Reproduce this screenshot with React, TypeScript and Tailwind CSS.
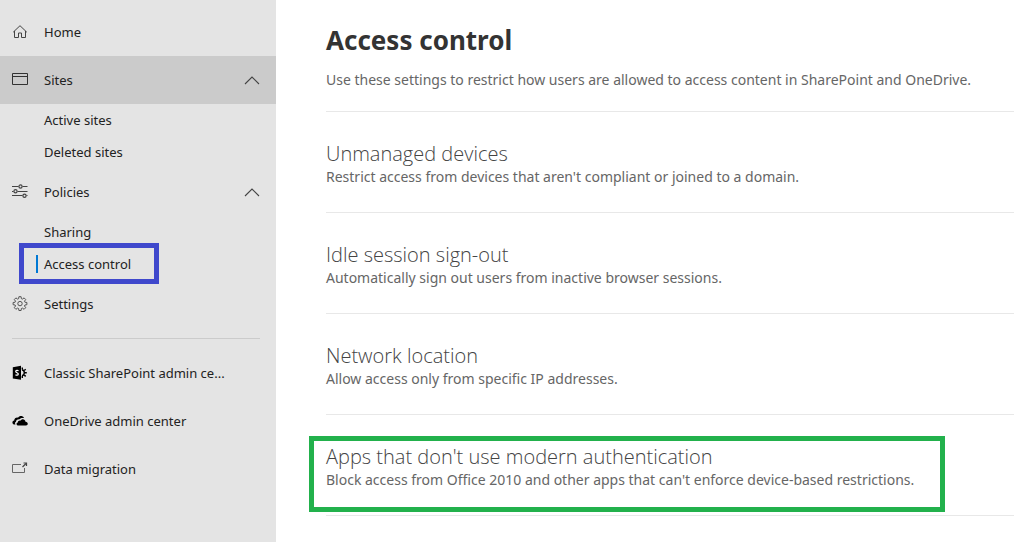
import React from "react";

type IconProps = { children: React.ReactNode };

function Icon({ children }: IconProps) {
  return (
    <svg
      viewBox="0 0 16 16"
      className="h-4 w-4 shrink-0"
      fill="none"
      stroke="#444"
      strokeWidth="1"
      aria-hidden="true"
    >
      {children}
    </svg>
  );
}

const HomeIcon = () => (
  <Icon>
    <path d="M1.200 8.200 8 1.700l6.800 6.500M2.500 7v6.500h4V9h3v4.500h4V7" />
  </Icon>
);

const SitesIcon = () => (
  <Icon>
    <path d="M.5 1.500h15v11H.5zM.5 4.500h15" stroke="#333" />
  </Icon>
);

const PoliciesIcon = () => (
  <Icon>
    <path d="M0 2.500h6.500M10.500 2.500h5M0 7.500h1.500M5.500 7.500h10M0 11.500h10.500M14.500 11.500h1" />
    <circle cx="8.500" cy="2.500" r="1.600" strokeWidth="1.200" />
    <circle cx="3.500" cy="7.300" r="1.600" strokeWidth="1.200" />
    <circle cx="12.500" cy="11.700" r="1.600" strokeWidth="1.200" />
  </Icon>
);

const SettingsIcon = () => (
  <Icon>
    <path
      stroke="#555"
      d="M6.900.7h2.200l.3 2 1 .4 1.700-1.200 1.600 1.600-1.200 1.700.4 1 2 .3v2.200l-2 .3-.4 1 1.200 1.700-1.600 1.600-1.700-1.200-1 .4-.3 2H6.900l-.3-2-1-.4-1.700 1.200-1.600-1.600L3.500 10l-.4-1-2-.3V6.500l2-.3.4-1-1.200-1.700 1.600-1.600 1.700 1.200 1-.4z"
    />
    <circle cx="8" cy="7.600" r="2.200" stroke="#555" />
  </Icon>
);

const SharePointIcon = () => (
  <Icon>
    <path d="M.8 2.200 9 .8v14L.8 13.400z" fill="#000" stroke="none" />
    <path
      d="M6.500 5.700C5.700 5.100 3.700 5 3.700 6.400c0 1.500 2.600 1.100 2.600 2.700 0 1.400-1.900 1.300-2.800.7"
      stroke="#fff"
      strokeWidth="1.200"
    />
    <path d="M10 4.800a3.100 3.100 0 0 1 0 6" stroke="#000" strokeWidth="1.400" />
    <path
      d="M10.300 4.500V2.600M12.200 5.500l1.500-1.300M13 7.800h1.800M12.200 10.100l1.500 1.300M10.300 11.100V13"
      stroke="#000"
      strokeWidth="1.400"
    />
  </Icon>
);

const OneDriveIcon = () => (
  <Icon>
    <path
      d="M3.500 11.500H2C-.1 10.800-.2 8.100 2.200 7.600c.1-2.100 2-3.500 3.800-2.900 1.300-2.200 4.900-2.200 6 .4-1.600-.4-3.200-.3-4.500 1.100-2.300-.1-3.500 1-3.500 2.500-1.200.5-1.200 1.800-.5 2.800z"
      fill="#000"
      stroke="none"
    />
    <path
      d="M6.500 12.500C4 12.500 4 9.800 5.800 9.600c0-1.700 1.500-2.500 2.900-2 1.300-2.200 4.600-1.500 4.800 1.100 2.900.1 2.900 3.800.5 3.800z"
      fill="#000"
      stroke="none"
    />
  </Icon>
);

const MigrationIcon = () => (
  <Icon>
    <path d="M9 3.500H.5v8h12V7" stroke="#666" />
    <path d="M10.500 6 14 2.500" strokeWidth="1.200" />
    <path d="M11.500 2h3v3" strokeWidth="1.200" />
  </Icon>
);

const Chevron = () => (
  <svg
    viewBox="0 0 16 16"
    className="h-4 w-4 shrink-0"
    fill="none"
    stroke="#444"
    strokeWidth="1.100"
    aria-hidden="true"
  >
    <path d="M1 12 8 5l7 7" />
  </svg>
);

type NavLinkProps = { icon: React.ReactNode; label: string };

function NavLink({ icon, label }: NavLinkProps) {
  return (
    <li>
      <a href="#" className="flex h-12 items-center gap-4 pr-4 pl-3">
        {icon}
        <span className="pt-0.5">{label}</span>
      </a>
    </li>
  );
}

type NavGroupProps = NavLinkProps & {
  highlighted?: boolean;
  children: React.ReactNode;
};

function NavGroup({ icon, label, highlighted, children }: NavGroupProps) {
  return (
    <li>
      <button
        type="button"
        aria-expanded="true"
        className={`flex h-12 w-full items-center gap-4 pr-4 pl-3 text-left ${
          highlighted ? "bg-[#cbcbcb]" : ""
        }`}
      >
        {icon}
        <span className="flex-1 pt-0.5">{label}</span>
        <Chevron />
      </button>
      <ul>{children}</ul>
    </li>
  );
}

function SubLink({ label, current }: { label: string; current?: boolean }) {
  return (
    <li className="relative">
      <a
        href="#"
        aria-current={current ? "page" : undefined}
        className="flex h-8 items-center pl-9"
      >
        <span
          className={`flex h-[18px] items-center border-l-2 pt-0.5 pl-1.5 ${
            current ? "border-[#0078d4]" : "border-transparent"
          }`}
        >
          {label}
        </span>
      </a>
      {current && (
        <span className="pointer-events-none absolute -top-[5px] left-[19px] h-[41px] w-[140px] border-5 border-[#3f48cc]" />
      )}
    </li>
  );
}

const policies = [
  {
    title: "Unmanaged devices",
    text: "Restrict access from devices that aren't compliant or joined to a domain.",
  },
  {
    title: "Idle session sign-out",
    text: "Automatically sign out users from inactive browser sessions.",
  },
  {
    title: "Network location",
    text: "Allow access only from specific IP addresses.",
  },
  {
    title: "Apps that don't use modern authentication",
    text: "Block access from Office 2010 and other apps that can't enforce device-based restrictions.",
    marked: true,
  },
];

export default function App() {
  return (
    <div className="flex min-h-screen bg-white font-['Segoe_UI','Noto_Sans','Open_Sans',sans-serif]">
      <nav
        aria-label="Admin center"
        className="w-[276px] shrink-0 bg-[#e4e4e4] pt-2 text-[13px] text-[#222]"
      >
        <ul>
          <NavLink icon={<HomeIcon />} label="Home" />
          <NavGroup icon={<SitesIcon />} label="Sites" highlighted>
            <SubLink label="Active sites" />
            <SubLink label="Deleted sites" />
          </NavGroup>
          <NavGroup icon={<PoliciesIcon />} label="Policies">
            <SubLink label="Sharing" />
            <SubLink label="Access control" current />
          </NavGroup>
          <NavLink icon={<SettingsIcon />} label="Settings" />
        </ul>
        <hr className="mt-2.5 mr-4 mb-2.5 ml-3 border-[#cbcbcb]" />
        <ul>
          <NavLink icon={<SharePointIcon />} label="Classic SharePoint admin ce..." />
          <NavLink icon={<OneDriveIcon />} label="OneDrive admin center" />
          <NavLink icon={<MigrationIcon />} label="Data migration" />
        </ul>
      </nav>

      <main className="min-w-0 flex-1 pt-5 pl-[50px] text-[#666]">
        <h1 className="text-[26px] leading-10 font-bold text-[#333]">
          Access control
        </h1>
        <p className="mt-2.5 mb-[21px] text-[14px] leading-5">
          Use these settings to restrict how users are allowed to access content
          in SharePoint and OneDrive.
        </p>
        <ul className="border-t border-[#e8e8e8]">
          {policies.map((policy) => (
            <li
              key={policy.title}
              className="relative border-b border-[#e8e8e8] pt-7 pb-[26px]"
            >
              <a href="#" className="block">
                <h2 className="font-['Segoe_UI','Open_Sans',sans-serif] text-[20px] leading-7 font-light text-[#444]">
                  {policy.title}
                </h2>
                <p className="text-[14px] leading-[18px]">{policy.text}</p>
              </a>
              {policy.marked && (
                <span className="pointer-events-none absolute top-[21px] -left-[17px] h-[76px] w-[636px] border-5 border-[#22b14c]" />
              )}
            </li>
          ))}
        </ul>
      </main>
    </div>
  );
}
